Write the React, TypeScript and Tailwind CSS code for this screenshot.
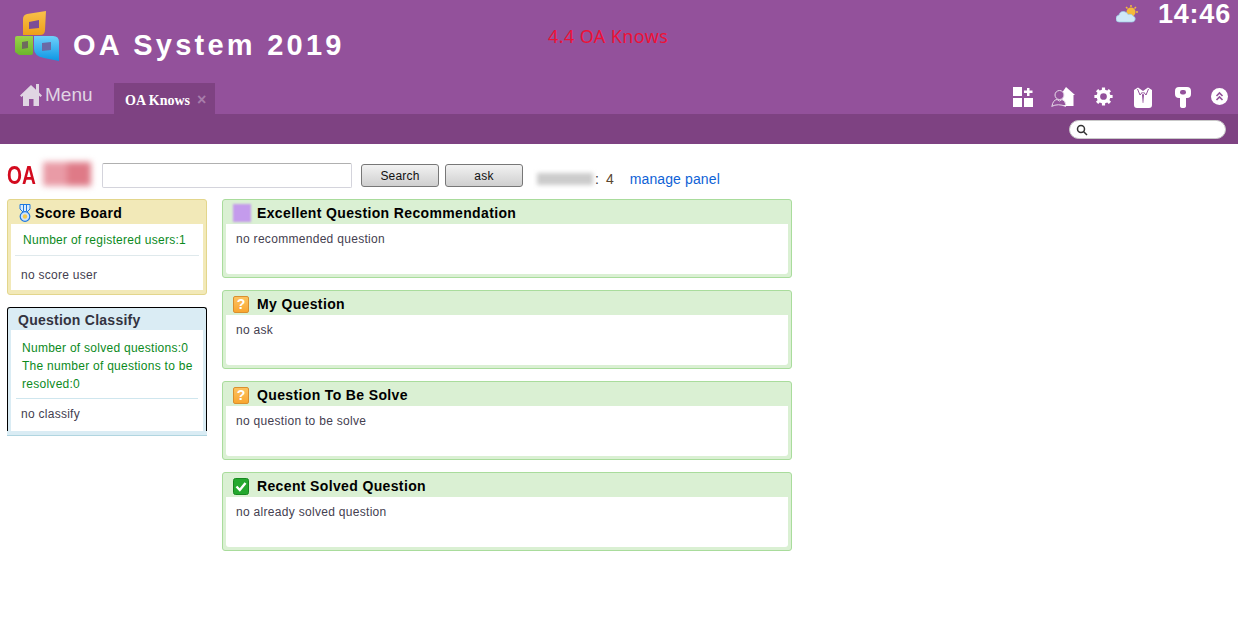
import type { ReactNode } from 'react'

function Logo() {
  return (
    <svg width="48" height="52" viewBox="0 0 48 52" className="block">
      <defs>
        <linearGradient id="lgO" x1="0" y1="0" x2="0" y2="1">
          <stop offset="0" stopColor="#f9c04a" />
          <stop offset="1" stopColor="#ee9f1a" />
        </linearGradient>
        <linearGradient id="lgB" x1="0" y1="0" x2="0" y2="1">
          <stop offset="0" stopColor="#6fd0fb" />
          <stop offset="1" stopColor="#0c96e4" />
        </linearGradient>
        <linearGradient id="lgG" x1="0" y1="0" x2="0" y2="1">
          <stop offset="0" stopColor="#9bd34a" />
          <stop offset="1" stopColor="#6cb52c" />
        </linearGradient>
      </defs>
      {/* orange */}
      <path d="M10 8Q10 4 14 3L33 0L32 19Q32 24 27 24H10Z" fill="url(#lgO)" />
      <path d="M16 11L26 9V17L16 18Z" fill="#7b4d96" />
      {/* green */}
      <path d="M2 27Q2 25 4 25H20V42Q20 44 18 44H6L2 41Z" fill="url(#lgG)" />
      <path d="M9 31L15 30V37L9 38Z" fill="#6e6a5e" />
      {/* blue */}
      <path d="M21 25H40Q46 25 46 31V50L31 47Q21 45 21 38Z" fill="url(#lgB)" />
      <path d="M29 32L38 31V39L29 40Z" fill="#6a6aa6" />
    </svg>
  )
}

function HomeIcon() {
  return (
    <svg width="22" height="24" viewBox="0 0 22 24" fill="#e0d5e3">
      <path d="M11 2L0 12.5L1.5 14L3 12.7V23H9V16H13.500V23H19V12.700L20.500 14L22 12.500L19 9.600V1H16V6.800Z" />
    </svg>
  )
}

function Weather() {
  return (
    <svg width="22" height="18" viewBox="0 0 22 18">
      <circle cx="15" cy="7" r="4.500" fill="#f5b93a" />
      <path d="M15 0V2M20 2L18.500 3.500M22 7H20M10 2L11.500 3.500" stroke="#f5b93a" strokeWidth="1.500" />
      <path d="M3 17Q0 17 0 13.500Q0 10.500 3 10Q4 6 8 6.500Q11 7 12 9.500Q16 8.500 17 11Q20 12 19 15Q18.500 17 16 17Z" fill="#cfe8f7" stroke="#9cc8e4" strokeWidth="0.700" />
    </svg>
  )
}

function TileIcon() {
  return (
    <svg width="20" height="20" viewBox="0 0 20 20" fill="#fff">
      <rect x="0" y="0" width="9" height="9" />
      <rect x="0" y="11" width="9" height="9" />
      <rect x="11" y="11" width="9" height="9" />
      <path d="M14 1H16.500V3.500H19.500V6H16.500V9H14V6H11V3.500H14Z" />
    </svg>
  )
}

function UserHomeIcon() {
  return (
    <svg width="24" height="21" viewBox="0 0 24 21">
      <path d="M15 0L24 8H22.500V19H11V8H9.500Z" fill="#fff" />
      <circle cx="8.500" cy="8" r="4.500" fill="#93519b" stroke="#e8dcea" strokeWidth="1" />
      <path d="M1 19Q2 13 6 12.500L8.500 14L11 12.500Q14 13 15 18M0.500 19.500Q7 16 15 19.500" fill="#93519b" stroke="#e8dcea" strokeWidth="1" />
    </svg>
  )
}

function GearIcon() {
  return (
    <svg width="19" height="19" viewBox="0 0 24 24" fill="none" stroke="#fff">
      <circle cx="12" cy="12" r="6.500" strokeWidth="4.500" />
      <path d="M12 0.500V4.500M12 19.500V23.500M0.500 12H4.500M19.500 12H23.500M3.900 3.900L6.700 6.700M17.300 17.300L20.100 20.100M3.900 20.100L6.700 17.300M17.300 6.700L20.100 3.900" strokeWidth="4" />
    </svg>
  )
}

function ShirtIcon() {
  return (
    <svg width="18" height="21" viewBox="0 0 18 21">
      <path d="M4 0.500L9 4L14 0.500L18 3V18Q18 21 15 21H3Q0 21 0 18V3Z" fill="#fff" />
      <path d="M3.500 2L6 8L8.500 5M14.500 2L12 8L9.500 5" fill="none" stroke="#93519b" strokeWidth="1" />
      <path d="M9 6L8 8L8.700 16H9.300L10 8Z" fill="#93519b" />
    </svg>
  )
}

function KeyIcon() {
  return (
    <svg width="16" height="21" viewBox="0 0 16 21">
      <path d="M4 0H12Q16 0 16 4V7Q16 11 12 11H11V19Q11 21 8 21Q5 21 5 19V11H4Q0 11 0 7V4Q0 0 4 0Z" fill="#fff" />
      <rect x="5" y="3" width="6" height="4.500" rx="2.200" fill="#93519b" />
    </svg>
  )
}

function CollapseIcon() {
  return (
    <svg width="17" height="17" viewBox="0 0 17 17">
      <circle cx="8.500" cy="8.500" r="8.500" fill="#fff" />
      <path d="M5.500 8L8.500 5L11.500 8M5.500 12L8.500 9L11.500 12" fill="none" stroke="#93519b" strokeWidth="1.600" />
    </svg>
  )
}

function MedalIcon() {
  return (
    <svg width="14" height="18" viewBox="0 0 14 18" fill="none">
      <path d="M2 0.500H12V5L9 8H5L2 5Z" fill="#dcecfb" stroke="#1d78e0" strokeWidth="1" />
      <path d="M5.500 1V7M8.500 1V7" stroke="#1d78e0" strokeWidth="1" />
      <circle cx="7" cy="12.500" r="4.800" fill="#cfe4fa" stroke="#1d78e0" strokeWidth="1.200" />
      <circle cx="7" cy="12.500" r="2.200" fill="#f3c94a" />
    </svg>
  )
}

function QuestionIcon() {
  return (
    <div className="flex h-[17px] w-4 items-center justify-center rounded-[2px] border border-[#d98f2e] bg-gradient-to-b from-[#fcc35f] to-[#f9a62e] text-[14px] leading-none font-bold text-white">
      ?
    </div>
  )
}

function CheckIcon() {
  return (
    <svg width="16" height="17" viewBox="0 0 16 17">
      <rect x="0.500" y="0.500" width="15" height="16" rx="2" fill="#24a82e" stroke="#17871f" />
      <path d="M3.500 8.500L6.800 12L12.500 5" fill="none" stroke="#fff" strokeWidth="2.400" />
    </svg>
  )
}

function SectionCard({ icon, title, text }: { icon: ReactNode; title: string; text: string }) {
  return (
    <div className="h-[79px] w-[570px] rounded-[3px] border border-[#a9dc9c] bg-[#daf0d3] px-[3px] pb-[3px]">
      <div className="flex h-[24px] items-center pt-[2px] pl-[7px]">
        <div className="flex w-[24px] shrink-0">{icon}</div>
        <span className="text-[14px] font-bold tracking-[0.36px] text-black">{title}</span>
      </div>
      <div className="h-[50px] rounded-b-[3px] bg-white pt-[6px] pl-[10px] text-[12px] leading-[18px] tracking-[0.3px] text-[#444050]">
        {text}
      </div>
    </div>
  )
}

export default function App() {
  return (
    <div className="relative h-[636px] w-[1238px] overflow-hidden bg-white font-['Liberation_Sans',Arial,sans-serif]">
      {/* Header */}
      <div className="bg-[#93519b]">
        <div className="flex h-[83px]">
          <div className="mt-[11px] ml-[13px]">
            <Logo />
          </div>
          <div className="mt-[26px] ml-[12px] text-[29px] leading-[38px] font-bold tracking-[3.25px] text-white">
            OA System 2019
          </div>
          <div className="ml-auto flex h-[28px] items-center pr-[7px]">
            <Weather />
            <span className="ml-[20px] text-[27px] leading-[28px] font-bold tracking-[0.8px] text-white">14:46</span>
          </div>
        </div>
        <div className="flex h-[31px]">
          <div className="flex h-[31px] items-center pb-[7px] pl-[20px]">
            <HomeIcon />
            <span className="ml-[3px] text-[19px] leading-[24px] text-[#e0d5e3]">Menu</span>
          </div>
          <div className="ml-[21.500px] flex h-[31px] w-[101px] items-center bg-[#7e4282] pt-[3px] pl-[11px] font-['Liberation_Serif',serif]">
            <span className="text-[14px] font-bold text-white">OA Knows</span>
            <span className="ml-[7px] font-['Liberation_Sans',sans-serif] text-[16px] leading-[14px] font-bold text-[#a77dab]">×</span>
          </div>
          <div className="ml-auto flex items-start pt-[4px]">
            <div className="mr-[18px]"><TileIcon /></div>
            <div className="mr-[19px]"><UserHomeIcon /></div>
            <div className="mr-[21px]"><GearIcon /></div>
            <div className="mr-[23px]"><ShirtIcon /></div>
            <div className="mr-[20px]"><KeyIcon /></div>
            <div className="mt-[1px] mr-[10px]"><CollapseIcon /></div>
          </div>
        </div>
      </div>
      <div className="flex h-[30px] items-start justify-end bg-[#7e4282] pt-[6px] pr-[12px]">
        <div className="flex h-[19px] w-[157px] items-center rounded-full border border-[#c9c9c9] bg-white pl-[6px]">
          <svg width="12" height="12" viewBox="0 0 12 12" fill="none" stroke="#333" strokeWidth="1.500">
            <circle cx="5" cy="5" r="3.500" />
            <path d="M7.500 7.500L11 11" />
          </svg>
        </div>
      </div>

      {/* Red notice over the header */}
      <div className="absolute top-[24px] left-[548px] font-['Noto_Sans',sans-serif] text-[18px] leading-[24px] tracking-[0.4px] text-[#ed1137]">
        4.4 OA Knows
      </div>

      {/* Search row */}
      <div className="flex h-[55px] items-start pl-[7px]">
        <div className="mt-[16px] w-[29px] origin-left scale-x-[0.74] text-[26px] leading-[30px] font-bold text-[#d30a1e]">OA</div>
        <div className="mt-[18px] ml-[7px] flex h-[24px] w-[48px] blur-[3px]">
          <div className="w-[24px] bg-[#e99ba6]" />
          <div className="w-[24px] bg-[#df7a87]" />
        </div>
        <div className="mt-[19px] ml-[11px] h-[25px] w-[250px] rounded-[2px] border border-[#d4d4dc] border-t-[#b0b0b0] bg-white" />
        <div className="mt-[20px] ml-[9px] flex h-[23px] w-[78px] items-center justify-center rounded-[3px] border border-[#777] bg-gradient-to-b from-[#f2f2f2] to-[#cfcfcf] text-[12px] tracking-[0.2px] text-[#111]">
          Search
        </div>
        <div className="mt-[20px] ml-[6px] flex h-[23px] w-[78px] items-center justify-center rounded-[3px] border border-[#777] bg-gradient-to-b from-[#f2f2f2] to-[#cfcfcf] text-[12px] tracking-[0.2px] text-[#111]">
          ask
        </div>
        <div className="mt-[29px] ml-[14px] h-[12px] w-[56px] bg-[#cccccc] blur-[2px]" />
        <div className="mt-[26px] ml-[2px] text-[14px] leading-[18px] text-[#5a4630]">
          <span className="text-[#333]">:</span>
          <span className="ml-[7px]">4</span>
        </div>
        <div className="mt-[26px] ml-[16px] text-[14px] leading-[18px] tracking-[0.12px] text-[#0f62d6]">manage panel</div>
      </div>

      {/* Body */}
      <div className="flex items-start pl-[7px]">
        <div className="flex w-[200px] flex-col gap-[12px]">
          <div className="h-[96px] rounded-[3px] border border-[#e3d68c] bg-[#f2e9b8] px-[3px] pb-[3px]">
            <div className="flex h-[24px] items-center pt-[2px] pl-[7px]">
              <MedalIcon />
              <span className="ml-[3px] text-[14px] font-bold tracking-[0.36px] text-black">Score Board</span>
            </div>
            <div className="h-[66px] bg-white px-[4px] text-[12px] tracking-[0.27px]">
              <div className="h-[32px] border-b border-[#dfe9ec] pt-[7px] pl-[8px] leading-[18px] text-[#0b8a1c]">
                Number of registered users:1
              </div>
              <div className="pt-[10px] pl-[6px] leading-[18px] text-[#444050]">no score user</div>
            </div>
          </div>
          <div>
            <div className="h-[124px] rounded-t-[3px] border-x border-t border-black bg-[#daecf4]">
              <div className="flex h-[22px] items-center pt-[2px] pl-[10px] text-[14px] font-bold tracking-[0.25px] text-[#333340]">
                Question Classify
              </div>
              <div className="mx-[3px] h-[101px] bg-white px-[5px] text-[12px] tracking-[0.27px]">
                <div className="h-[69px] border-b border-[#cfe6ee] pt-[9px] pl-[6px] leading-[18px] text-[#0b8a1c]">
                  Number of solved questions:0
                  <br />
                  The number of questions to be
                  <br />
                  resolved:0
                </div>
                <div className="pt-[6px] pl-[5px] leading-[18px] text-[#444050]">no classify</div>
              </div>
            </div>
            <div className="h-[5px] border-b border-[#b0d5e0] bg-[#daecf4]" />
          </div>
        </div>
        <div className="ml-[15px] flex flex-col gap-[12px]">
          <SectionCard
            icon={<div className="h-[18px] w-[18px] bg-[#c49bec] blur-[1px]" />}
            title="Excellent Question Recommendation"
            text="no recommended question"
          />
          <SectionCard icon={<QuestionIcon />} title="My Question" text="no ask" />
          <SectionCard icon={<QuestionIcon />} title="Question To Be Solve" text="no question to be solve" />
          <SectionCard icon={<CheckIcon />} title="Recent Solved Question" text="no already solved question" />
        </div>
      </div>
    </div>
  )
}
